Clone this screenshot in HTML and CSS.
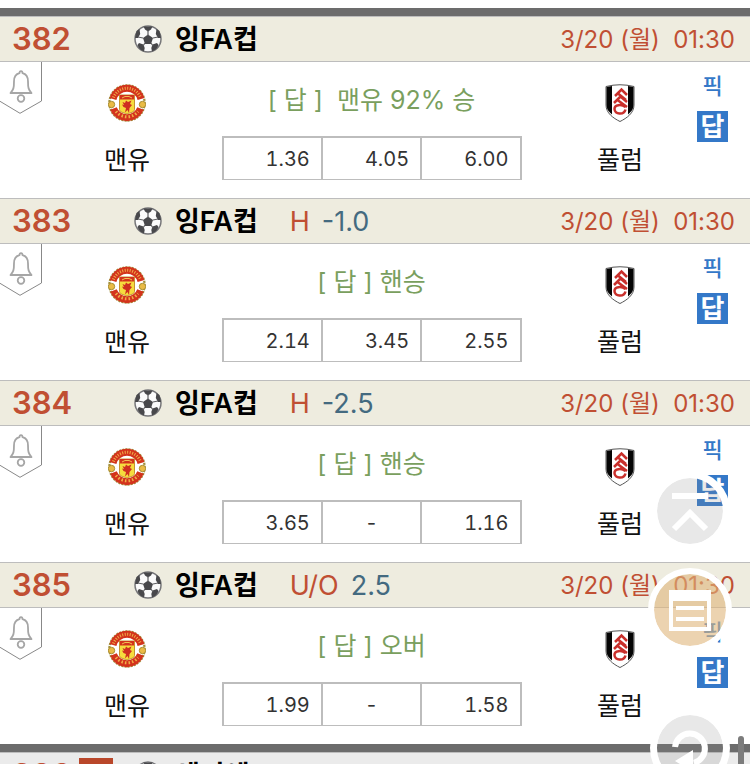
FILE: index.html
```html
<!DOCTYPE html>
<html lang="ko">
<head>
    <meta charset="UTF-8">
    <meta name="viewport" content="width=device-width, initial-scale=1.0">
    <title>잉FA컵</title>
    <link rel="stylesheet" href="styles.css">
</head>
<body>

    <!-- Shared icons -->
    <svg class="icon-defs" aria-hidden="true">
        <symbol id="ball" viewBox="0 0 28 28">
            <circle cx="14" cy="14" r="13" fill="#fbfbfb" stroke="#77777a" stroke-width="1.500"/>
            <path d="M14 9.500l5 3.600-2 5.900h-6l-2-5.900z" fill="#48484b"/>
            <path d="M9.500 1.500h9l-1.500 3L14 6.500l-3-2zM1 13l1.500-7L5.500 4l.7 5-2.200 4zM27 13l-1.500-7-3-2-.7 5 2.200 4zM3.500 20l1.500-2 4.500 1.500 1.200 3.500-.7 3.500C7 25.500 4.500 23.500 3.500 20zM24.500 20l-1.500-2-4.500 1.500-1.200 3.500.7 3.500c3-1 5.500-3 6.500-6.500z" fill="#48484b"/>
            <path d="M14 5v6M9 13l-5-1M19 13l5-1M11 18l-2 3M17 18l2 3" stroke="#606063" stroke-width="1.200" fill="none"/>
        </symbol>
        <symbol id="bell" viewBox="0 0 42 52">
            <path d="M41.500-1V39L20 51.300-.5 39" fill="#fff" stroke="#888" stroke-width="1"/>
            <path d="M10.500 31c3-3.500 3.500-5 3.500-11.500 0-4.500 2-7.500 5.500-8.300 0-2.800 3-2.800 3 0 3.500.8 5.500 3.800 5.500 8.300 0 6.500.5 8 3.500 11.500z" fill="none" stroke="#a6a6a6" stroke-width="1.800" stroke-linejoin="round"/>
            <circle cx="21" cy="36.500" r="3.300" fill="none" stroke="#a6a6a6" stroke-width="1.800"/>
        </symbol>
        <symbol id="united" viewBox="0 0 38 38">
            <circle cx="19" cy="19" r="17" fill="none" stroke="#a08f3b" stroke-width="3.500" stroke-dasharray="2 1"/>
            <circle cx="19" cy="19" r="16.500" fill="#fff"/>
            <path d="M5 15A14.500 14.500 0 0 1 33 15M5.500 24.500A14.500 14.500 0 0 0 32.500 24.500" fill="none" stroke="#d3331c" stroke-width="7"/>
            <path d="M5.500 13.500A14.500 14.500 0 0 1 32.500 13.500" fill="none" stroke="#efae48" stroke-width="3" stroke-dasharray="1 1.500"/>
            <path d="M8 27.500A14 14 0 0 0 30 27.500" fill="none" stroke="#efae48" stroke-width="3" stroke-dasharray="1.500 2"/>
            <circle cx="3.500" cy="20.500" r="3.200" fill="#eabb45" stroke="#a98f35"/>
            <circle cx="34.500" cy="20.500" r="3.200" fill="#eabb45" stroke="#a98f35"/>
            <path d="M11.500 11h15v14.500c0 2.500-3.500 3-7.500 4.500-4-1.500-7.500-2-7.500-4.500z" fill="#f6dc3e" stroke="#c7932d"/>
            <path d="M12 11h14v4.500H12z" fill="#d3331c"/>
            <path d="M14 14l3-1.500h4l3 1.500" fill="none" stroke="#f2bd50"/>
            <path d="M14.500 18l2.500 1 1-2.500 2 1.500 3.500-1.500-1.500 3.500 2 1-2.500 3-.5 5-1.500-3-2.500 2.500 1-4.500-2.500-1-1.500-2.500 2 .5z" fill="#cf2f20"/>
        </symbol>
        <symbol id="fulham" viewBox="0 0 30 38">
            <path d="M1 2.500Q15-1 29 2.500V21c0 8-7 13-14 16.500C8 34 1 29 1 21z" fill="#fff" stroke="#555" stroke-width="1"/>
            <path d="M1.500 3L7 2v28.500C3.500 27.500 1.500 25 1.500 21zM28.500 3L23 2v28.500c3.500-3 5.500-5.500 5.500-9.500z" fill="#050505"/>
            <path d="M10 12l6.500-6.500L22 11M13 9.500l8 6.500M9 19l6.500-6.500L22 18M12.500 16l9.500 7M20.500 23c-4-3-11-2.500-11 2 0 5.500 9.500 6.500 11 .5" fill="none" stroke="#c9302c" stroke-width="2.500"/>
        </symbol>
    </svg>

    <main class="matches">

        <div class="divider"></div>

        <!-- 382 -->
        <section class="match">
            <header class="match-header">
                <span class="number">382</span>
                <svg class="ball"><use href="#ball"/></svg>
                <h2>잉FA컵</h2>
                <time>3/20 (월)&nbsp; 01:30</time>
            </header>
            <div class="match-body">
                <button class="alarm" aria-label="알림"><svg><use href="#bell"/></svg></button>
                <div class="team">
                    <svg class="united"><use href="#united"/></svg>
                    <span>맨유</span>
                </div>
                <div class="center">
                    <p>[ 답 ]&nbsp; 맨유 92% 승</p>
                    <table class="odds">
                        <tr><td>1.36</td><td>4.05</td><td>6.00</td></tr>
                    </table>
                </div>
                <div class="team">
                    <svg class="fulham"><use href="#fulham"/></svg>
                    <span>풀럼</span>
                </div>
                <div class="picks">
                    <button class="pick">픽</button>
                    <button class="answer">답</button>
                </div>
            </div>
        </section>

        <!-- 383 -->
        <section class="match">
            <header class="match-header">
                <span class="number">383</span>
                <svg class="ball"><use href="#ball"/></svg>
                <h2>잉FA컵</h2>
                <span class="type">H</span>
                <span class="line">-1.0</span>
                <time>3/20 (월)&nbsp; 01:30</time>
            </header>
            <div class="match-body">
                <button class="alarm" aria-label="알림"><svg><use href="#bell"/></svg></button>
                <div class="team">
                    <svg class="united"><use href="#united"/></svg>
                    <span>맨유</span>
                </div>
                <div class="center">
                    <p>[ 답 ] 핸승</p>
                    <table class="odds">
                        <tr><td>2.14</td><td>3.45</td><td>2.55</td></tr>
                    </table>
                </div>
                <div class="team">
                    <svg class="fulham"><use href="#fulham"/></svg>
                    <span>풀럼</span>
                </div>
                <div class="picks">
                    <button class="pick">픽</button>
                    <button class="answer">답</button>
                </div>
            </div>
        </section>

        <!-- 384 -->
        <section class="match">
            <header class="match-header">
                <span class="number">384</span>
                <svg class="ball"><use href="#ball"/></svg>
                <h2>잉FA컵</h2>
                <span class="type">H</span>
                <span class="line">-2.5</span>
                <time>3/20 (월)&nbsp; 01:30</time>
            </header>
            <div class="match-body">
                <button class="alarm" aria-label="알림"><svg><use href="#bell"/></svg></button>
                <div class="team">
                    <svg class="united"><use href="#united"/></svg>
                    <span>맨유</span>
                </div>
                <div class="center">
                    <p>[ 답 ] 핸승</p>
                    <table class="odds">
                        <tr><td>3.65</td><td class="none">-</td><td>1.16</td></tr>
                    </table>
                </div>
                <div class="team">
                    <svg class="fulham"><use href="#fulham"/></svg>
                    <span>풀럼</span>
                </div>
                <div class="picks">
                    <button class="pick">픽</button>
                    <button class="answer">답</button>
                </div>
            </div>
        </section>

        <!-- 385 -->
        <section class="match">
            <header class="match-header">
                <span class="number">385</span>
                <svg class="ball"><use href="#ball"/></svg>
                <h2>잉FA컵</h2>
                <span class="type">U/O</span>
                <span class="line">2.5</span>
                <time>3/20 (월)&nbsp; 01:30</time>
            </header>
            <div class="match-body">
                <button class="alarm" aria-label="알림"><svg><use href="#bell"/></svg></button>
                <div class="team">
                    <svg class="united"><use href="#united"/></svg>
                    <span>맨유</span>
                </div>
                <div class="center">
                    <p>[ 답 ] 오버</p>
                    <table class="odds">
                        <tr><td>1.99</td><td class="none">-</td><td>1.58</td></tr>
                    </table>
                </div>
                <div class="team">
                    <svg class="fulham"><use href="#fulham"/></svg>
                    <span>풀럼</span>
                </div>
                <div class="picks">
                    <button class="pick">픽</button>
                    <button class="answer">답</button>
                </div>
            </div>
        </section>

        <div class="divider"></div>

        <!-- 386 -->
        <section class="match">
            <header class="match-header single">
                <span class="number">386 <b class="badge">S</b></span>
                <svg class="ball"><use href="#ball"/></svg>
                <h2>세리에</h2>
            </header>
        </section>

    </main>

    <!-- Floating buttons -->
    <nav class="floating">
        <button class="float-btn" aria-label="맨 위로">
            <svg viewBox="0 0 66 66"><path d="M15 18h36M17 51l16-16 16 16" fill="none" stroke="#fff" stroke-width="6"/></svg>
        </button>
        <button class="float-btn list" aria-label="목록">
            <svg viewBox="0 0 72 72"><path d="M15 16h42v41H15zM19 27v26h34V27zM22 32h28v4H22zM22 43h28v4H22z" fill="#fff" fill-rule="evenodd"/></svg>
        </button>
        <button class="float-btn reload" aria-label="새로고침">
            <svg viewBox="0 0 66 66"><path d="M18 32A15 15 0 1 1 37 48" fill="none" stroke="#fff" stroke-width="6"/><path d="M18 46l18-11v22z" fill="#fff"/></svg>
        </button>
    </nav>
    <div class="scroll-thumb"></div>

</body>
</html>
```
FILE: styles.css
```css
body {
    margin: 0;
    background-color: #ffffff;
    color: #111111;
    font-family: Inter, "Noto Sans CJK KR", sans-serif;
}
button {
    border: none;
    padding: 0;
    background: none;
    font-family: inherit;
    cursor: pointer;
}
.icon-defs {
    position: absolute;
    width: 0;
    height: 0;
}
.matches {
    height: 100vh;
    box-sizing: border-box;
    padding-top: 8px;
    overflow: hidden;
}
.divider {
    height: 8px;
    background-color: #6c6c6c;
}

/* Header row */
.match-header {
    display: flex;
    align-items: center;
    box-sizing: border-box;
    height: 46px;
    padding: 0 15px 0 12px;
    border-top: 1px solid #bdbdbd;
    border-bottom: 1px solid #bdbdbd;
    background-color: #eeecdf;
    line-height: 44px;
    white-space: nowrap;
}
.match-header.single {
    background-color: #ebebeb;
}
.match-header h2, .match-header time, .type, .line {
    padding-top: 2px;
}
.number {
    display: flex;
    align-items: center;
    width: 122px;
    color: #c04f33;
    font-size: 31px;
    font-weight: 600;
}
.badge {
    width: 34px;
    height: 34px;
    margin-left: 8px;
    background-color: #b9472a;
    color: #ffffff;
    font-size: 26px;
    line-height: 34px;
    text-align: center;
}
.ball {
    width: 28px;
    height: 28px;
}
.match-header h2 {
    margin: 0 32px 0 13px;
    color: #000000;
    font-size: 27px;
    font-weight: 600;
}
.type, .line {
    font-size: 27px;
}
.type {
    margin-right: 12px;
    color: #c04f33;
}
.line {
    color: #446a80;
}
.match-header time {
    margin-left: auto;
    color: #c04f33;
    font-size: 24px;
}

/* Match content */
.match-body {
    position: relative;
    display: grid;
    grid-template-columns: 154px 1fr 154px 31px;
    box-sizing: border-box;
    height: 136px;
    padding: 0 22px 0 50px;
}
.alarm {
    position: absolute;
    top: 0;
    left: 0;
}
.alarm svg {
    display: block;
    width: 42px;
    height: 52px;
}
.team {
    display: flex;
    flex-direction: column;
    align-items: center;
    padding-top: 22px;
    font-size: 25px;
    line-height: 36px;
}
.team svg {
    height: 38px;
    margin-bottom: 20px;
}
.united {
    width: 38px;
}
.fulham {
    width: 30px;
}
.center {
    display: flex;
    flex-direction: column;
    align-items: center;
    padding: 20px 4px 0 0;
}
.center p {
    margin: 0 0 18px;
    color: #7a9f5e;
    font-size: 25px;
    line-height: 36px;
}
.odds {
    width: 300px;
    height: 44px;
    table-layout: fixed;
    border-collapse: separate;
    border-spacing: 0;
    border: 2px solid #bdbdbd;
    border-right: none;
    border-bottom-width: 1px;
}
.odds td {
    padding: 0 11px;
    border-right: 2px solid #bdbdbd;
    color: #333333;
    font-size: 20px;
    font-variant-numeric: tabular-nums;
    text-align: right;
}
.odds .none {
    text-align: center;
}
.picks {
    display: flex;
    flex-direction: column;
    gap: 9px;
    padding-top: 8px;
}
.pick, .answer {
    color: #3478c8;
    font-size: 22px;
    font-weight: 500;
    line-height: 32px;
}
.answer {
    height: 31px;
    background-color: #3478c8;
    color: #ffffff;
    font-size: 26px;
    font-weight: 700;
    line-height: 31px;
}

/* Floating buttons */
.floating {
    position: fixed;
    top: 471px;
    right: 18px;
    display: flex;
    flex-direction: column;
    align-items: center;
    gap: 17px;
}
.float-btn {
    box-sizing: border-box;
    width: 80px;
    height: 80px;
    border: 7px solid #ffffff;
    border-radius: 50%;
    background-color: rgba(140, 140, 140, 0.2);
    background-clip: padding-box;
}
.float-btn svg {
    display: block;
    width: 100%;
}
.float-btn.list {
    width: 84px;
    height: 84px;
    border-width: 6px;
    background-color: rgba(223, 182, 123, 0.6);
}
.float-btn.reload {
    margin-top: 39px;
}
.scroll-thumb {
    position: fixed;
    top: 736px;
    right: 6px;
    width: 6px;
    height: 60px;
    border-radius: 3px;
    background-color: #7c7c7c;
}
```
